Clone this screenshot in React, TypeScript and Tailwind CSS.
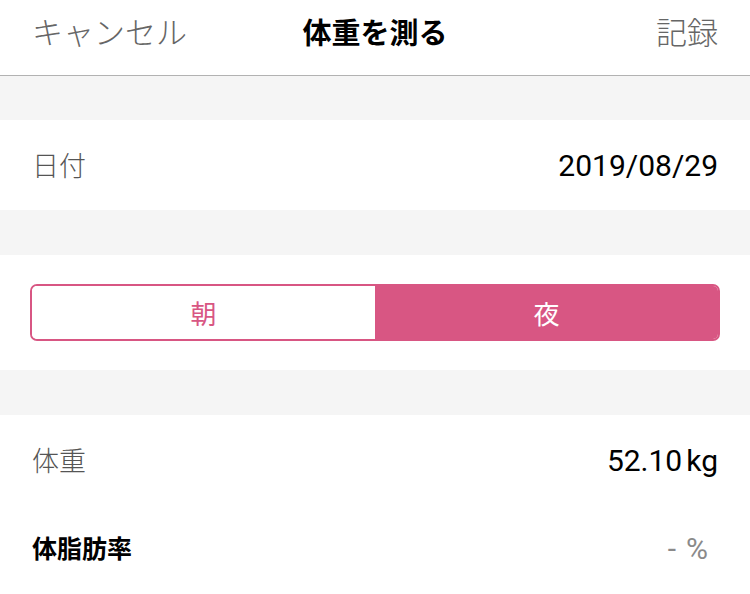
export default function App() {
  const font = { fontFamily: '"Noto Sans CJK JP", "Noto Sans", sans-serif' };
  const num = { fontFamily: 'Roboto, "Noto Sans", sans-serif' };
  return (
    <div className="w-[750px] h-[594px] bg-white overflow-hidden" style={font}>
      <div className="h-[76px] grid grid-cols-[1fr_auto_1fr] items-center px-[32px] pb-[12px] border-b border-[#b2b2b2]">
        <span className="text-[31px] text-[#666666] font-light justify-self-start">キャンセル</span>
        <span className="text-[29px] font-bold text-black">体重を測る</span>
        <span className="text-[31px] text-[#666666] font-light justify-self-end">記録</span>
      </div>
      <div className="h-[44px] bg-[#f5f5f5]" />
      <div className="h-[90px] flex items-center justify-between px-[32px]">
        <span className="text-[27px] text-[#555555] font-light">日付</span>
        <span className="text-[30px] text-black" style={num}>2019/08/29</span>
      </div>
      <div className="h-[45px] bg-[#f5f5f5]" />
      <div className="h-[115px] flex items-center px-[30px]">
        <div className="flex w-full h-[57px] border-2 border-[#d85683] rounded-[7px] overflow-hidden">
          <div className="flex-1 flex items-center justify-center text-[26px] text-[#d85683] bg-white">朝</div>
          <div className="flex-1 flex items-center justify-center text-[26px] text-white bg-[#d85683]">夜</div>
        </div>
      </div>
      <div className="h-[45px] bg-[#f5f5f5]" />
      <div className="h-[90px] flex items-center justify-between px-[32px]">
        <span className="text-[27px] text-[#555555] font-light">体重</span>
        <span className="text-[30px] text-black" style={num}>52.10<span className="ml-[4px]">kg</span></span>
      </div>
      <div className="h-[86px] flex items-center justify-between pl-[32px] pr-[42px]">
        <span className="text-[25px] font-bold text-black">体脂肪率</span>
        <span className="text-[30px] text-[#8a8a8a]" style={num}>-<span className="ml-[10px]">%</span></span>
      </div>
    </div>
  );
}
